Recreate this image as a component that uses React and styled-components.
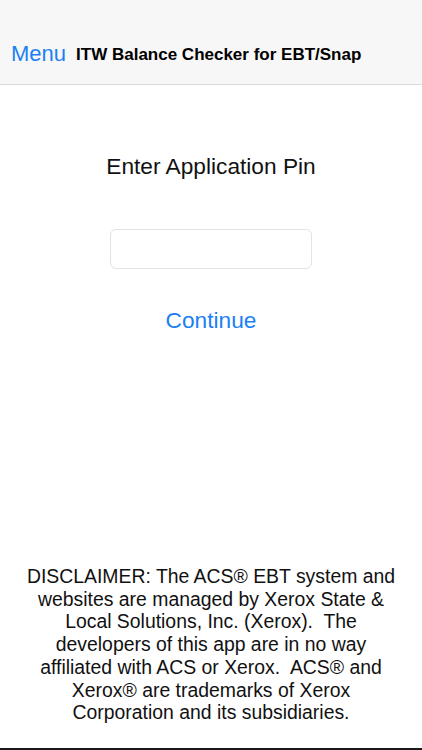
import React from 'react';
import styled, { createGlobalStyle } from 'styled-components';

const GlobalStyle = createGlobalStyle`
  html, body {
    margin: 0;
    padding: 0;
    background: #fff;
    font-family: 'Liberation Sans', Arial, sans-serif;
  }
`;

const Screen = styled.div`
  width: 422px;
  height: 750px;
  display: flex;
  flex-direction: column;
  background: #fff;
  box-sizing: border-box;
  border-bottom: 2px solid #1a1a1a;
  overflow: hidden;
`;

const NavBar = styled.div`
  height: 85px;
  flex-shrink: 0;
  background: #f7f7f7;
  border-bottom: 1px solid #d9d9d9;
  display: flex;
  align-items: flex-end;
  padding: 0 0 17px 11px;
  box-sizing: border-box;
`;

const MenuButton = styled.span`
  color: #1b80f5;
  font-size: 22px;
  line-height: 26px;
  margin-right: 10px;
`;

const NavTitle = styled.span`
  color: #000;
  font-size: 17px;
  font-weight: bold;
  line-height: 24px;
`;

const Body = styled.div`
  flex: 1;
  display: flex;
  flex-direction: column;
  align-items: center;
`;

const Prompt = styled.div`
  margin-top: 68px;
  font-size: 22.7px;
  line-height: 26px;
  color: #111;
`;

const PinInput = styled.input`
  margin-top: 50px;
  width: 202px;
  height: 40px;
  box-sizing: border-box;
  border: 1px solid #e3e3e3;
  border-radius: 6px;
  outline: none;
  background: #fff;
`;

const ContinueButton = styled.button`
  margin-top: 38px;
  background: none;
  border: none;
  padding: 0;
  font-family: inherit;
  font-size: 22.7px;
  line-height: 26px;
  color: #1b80f5;
`;

const Disclaimer = styled.p`
  margin: auto 0 24px;
  padding: 0 22px;
  text-align: center;
  font-size: 19.4px;
  line-height: 22.7px;
  color: #111;
`;

export default function App() {
  return (
    <>
      <GlobalStyle />
      <Screen>
        <NavBar>
          <MenuButton>Menu</MenuButton>
          <NavTitle>ITW Balance Checker for EBT/Snap</NavTitle>
        </NavBar>
        <Body>
          <Prompt>Enter Application Pin</Prompt>
          <PinInput type="password" />
          <ContinueButton>Continue</ContinueButton>
          <Disclaimer>
            DISCLAIMER: The ACS® EBT system and websites are managed by Xerox State &amp; Local Solutions, Inc. (Xerox).&nbsp; The developers of this app are in no way affiliated with ACS or Xerox.&nbsp; ACS® and Xerox® are trademarks of Xerox Corporation and its subsidiaries.
          </Disclaimer>
        </Body>
      </Screen>
    </>
  );
}
